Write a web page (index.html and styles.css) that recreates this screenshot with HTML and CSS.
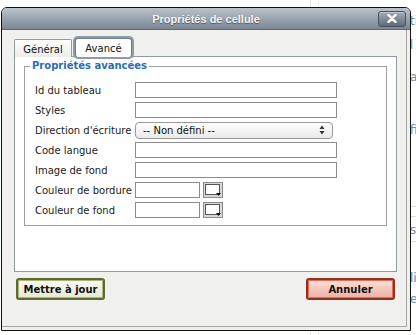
FILE: index.html
```html
<!DOCTYPE html>
<html lang="fr">
<head>
<meta charset="utf-8">
<title>Propriétés de cellule</title>
<link rel="stylesheet" href="styles.css">
</head>
<body>
<div class="page">
  <div class="dialog">
    <div class="titlebar">
      <span></span>
      <span class="title">Propriétés de cellule</span>
      <span class="close-wrap">
        <button class="close" type="button" aria-label="Fermer">
          <svg width="10" height="9" viewBox="0 0 10 9"><path d="M1.5 1 L8.5 8 M8.5 1 L1.5 8" stroke="#fff" stroke-width="2.4" stroke-linecap="round"/></svg>
        </button>
      </span>
    </div>
    <div class="body">
      <div class="inner">
        <div class="tabs">
          <span class="tab">Général</span>
          <span class="tab active">Avancé</span>
        </div>
        <div class="panel">
          <fieldset class="group">
            <legend>Propriétés avancées</legend>
            <div class="row"><span class="label">Id du tableau</span><span class="input"></span></div>
            <div class="row"><span class="label">Styles</span><span class="input"></span></div>
            <div class="row"><span class="label">Direction d'écriture</span>
              <span class="select"><span class="select-text">-- Non défini --</span>
                <svg class="arrows" width="6" height="10" viewBox="0 0 6 10"><path d="M3 0.5 L5.5 4 L0.5 4 Z M3 9.5 L5.5 6 L0.5 6 Z" fill="#333"/></svg>
              </span>
            </div>
            <div class="row"><span class="label">Code langue</span><span class="input"></span></div>
            <div class="row"><span class="label">Image de fond</span><span class="input"></span></div>
            <div class="row"><span class="label">Couleur de bordure</span><span class="input short"></span>
              <svg class="picker" width="20" height="16" viewBox="0 0 20 16"><rect x="0.5" y="0.5" width="19" height="15" fill="#d8d8d4" stroke="#8a8a8a"/><rect x="2.5" y="2.5" width="14" height="10" fill="#fff" stroke="#555"/><path d="M13 11 L18 11 L15.5 14 Z" fill="#111"/></svg>
            </div>
            <div class="row"><span class="label">Couleur de fond</span><span class="input short"></span>
              <svg class="picker" width="20" height="16" viewBox="0 0 20 16"><rect x="0.5" y="0.5" width="19" height="15" fill="#d8d8d4" stroke="#8a8a8a"/><rect x="2.5" y="2.5" width="14" height="10" fill="#fff" stroke="#555"/><path d="M13 11 L18 11 L15.5 14 Z" fill="#111"/></svg>
            </div>
          </fieldset>
        </div>
        <div class="actions">
          <button class="btn update" type="button">Mettre à jour</button>
          <button class="btn cancel" type="button">Annuler</button>
        </div>
      </div>
    </div>
  </div>
  <div class="behind">
    <span class="frag f1">ti</span>
    <span class="frag f2">l</span>
    <span class="frag f3">a</span>
    <span class="frag f4">fi</span>
    <span class="rule r1"></span>
    <span class="rule r2"></span>
    <span class="frag f5">s</span>
    <span class="rule r3"></span>
    <span class="frag f6">li</span>
    <span class="frag f7">es</span>
  </div>
</div>
</body>
</html>
```
FILE: styles.css
```css
html, body {
  margin: 0;
  padding: 0;
}
body {
  width: 416px;
  height: 335px;
  overflow: hidden;
  background: #fff;
  font-family: "DejaVu Sans", Verdana, sans-serif;
  font-size: 10px;
  color: #111;
}
.page {
  display: flex;
  height: 335px;
  background:
    linear-gradient(to right, transparent 310px, #e4e4e4 310px, #e4e4e4 311px, transparent 311px),
    linear-gradient(to right, transparent 318px, #ececec 318px, #ececec 319px, transparent 319px);
}
.dialog {
  box-sizing: border-box;
  width: 410px;
  height: 324px;
  margin: 7px 0 0 1px;
  border: 1px solid #111;
  border-radius: 6px 6px 0 0;
  background: #f0f0ee;
  display: flex;
  flex-direction: column;
  overflow: hidden;
  flex: none;
}
.titlebar {
  height: 21px;
  flex: none;
  display: grid;
  grid-template-columns: 1fr auto 1fr;
  align-items: center;
  background: linear-gradient(#bac3cc, #7b8793);
  border-bottom: 1px solid #5d6873;
}
.title {
  font-family: "Liberation Sans", Arial, sans-serif;
  font-weight: bold;
  font-size: 11px;
  color: #f4f6f8;
  text-shadow: 0 1px 1px #4a545e;
}
.close-wrap {
  display: flex;
  justify-content: flex-end;
  padding-right: 4px;
}
.close {
  width: 28px;
  height: 16px;
  padding: 0;
  margin: 0;
  border: 1px solid #49535d;
  border-radius: 3px;
  background: linear-gradient(#a3adb7, #5e6a75);
  box-shadow: inset 0 1px 0 rgba(255,255,255,0.35);
  display: flex;
  align-items: center;
  justify-content: center;
}
.body {
  flex: 1;
  padding: 0 3px 3px 0;
  display: flex;
}
.inner {
  flex: 1;
  border-right: 1px solid #a9a9a4;
  border-bottom: 1px solid #a9a9a4;
  padding: 9px 9px 0 12px;
}
.tabs {
  display: flex;
  align-items: flex-end;
  height: 18px;
  margin-bottom: -1px;
  position: relative;
  z-index: 1;
}
.tab {
  box-sizing: border-box;
  height: 18px;
  width: 58px;
  border: 1px solid #919b9c;
  border-bottom: none;
  border-radius: 2px 2px 0 0;
  background: linear-gradient(#fefefe, #ebebe8);
  display: flex;
  align-items: center;
  justify-content: center;
  padding-top: 1px;
  color: #111;
}
.tab.active {
  width: 57px;
  height: 19px;
  margin-left: 3px;
  background: #fff;
  border-color: #6f7e8c;
  box-shadow: 0 0 0 2px #8e9ba8;
  border-radius: 3px;
}
.panel {
  box-sizing: border-box;
  height: 216px;
  background: #fff;
  border: 1px solid #919b9c;
  padding: 3px 0 0 9px;
}
.group {
  box-sizing: border-box;
  width: 363px;
  margin: 0;
  border: 1px solid #a0a0a0;
  padding: 8px 0 5px 10px;
}
.group legend {
  font-weight: bold;
  color: #2a6db3;
  line-height: 12px;
  padding: 0 2px;
  margin-left: -5px;
}
.row {
  display: flex;
  align-items: center;
  height: 20px;
}
.label {
  width: 100px;
  flex: none;
  white-space: nowrap;
  color: #1a1a1a;
}
.input {
  box-sizing: border-box;
  width: 202px;
  height: 16px;
  border: 1px solid #8c8c8c;
  background: #fff;
}
.input.short {
  width: 65px;
}
.picker {
  margin-left: 3px;
  display: block;
}
.select {
  box-sizing: border-box;
  width: 198px;
  height: 17px;
  border: 1px solid #9a9a9a;
  border-radius: 4px;
  background: linear-gradient(#ffffff, #e9e9e9);
  display: flex;
  align-items: center;
  justify-content: space-between;
  padding: 0 7px 0 7px;
}
.select-text {
  color: #111;
}
.arrows {
  display: block;
}
.actions {
  display: flex;
  justify-content: space-between;
  padding: 6px 2px 0 2px;
}
.btn {
  box-sizing: border-box;
  width: 89px;
  height: 22px;
  margin: 0;
  padding: 0;
  font-family: "DejaVu Sans", Verdana, sans-serif;
  font-size: 10px;
  font-weight: bold;
  color: #111;
  border-radius: 3px;
}
.btn.update {
  border: 2px solid #5f6b2e;
  background: linear-gradient(#fbfbf3, #e6e8d2);
  box-shadow: inset 0 0 0 1px #aab37a;
}
.btn.cancel {
  border: 2px solid #93301f;
  background: linear-gradient(#fbe0d8, #eeb0a2);
  box-shadow: inset 0 0 0 1px #d9715d;
}
.behind {
  flex: 1;
  display: flex;
  flex-direction: column;
  font-family: "DejaVu Sans", Verdana, sans-serif;
  font-size: 12px;
  color: #8a8a8a;
  overflow: hidden;
  white-space: nowrap;
}
.frag {
  line-height: 14px;
  display: block;
  margin-left: -1px;
}
.f1 { margin-top: 14px; }
.f2 { margin-top: 10px; }
.f3 { margin-top: 18px; }
.f4 { margin-top: 39px; }
.rule { display: block; height: 1px; background: #dcdcdc; }
.r1 { margin-top: 69px; }
.r2 { margin-top: 9px; }
.f5 { margin-top: 6px; color: #7a8ea0; }
.r3 { margin-top: 4px; }
.f6 { margin-top: 29px; color: #5d7fa5; }
.f7 { margin-top: 7px; color: #7a8ea0; }
```
